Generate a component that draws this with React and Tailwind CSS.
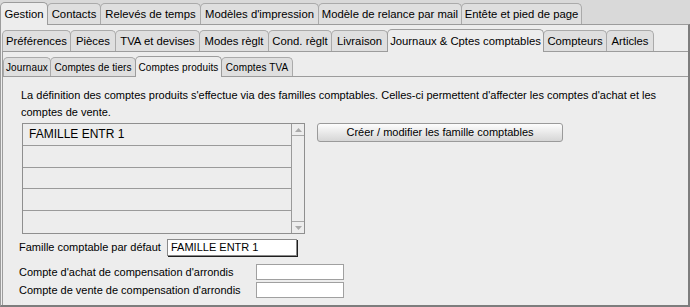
import React from 'react';

const row1 = [
    { label: 'Gestion', w: 48, selected: true },
    { label: 'Contacts', w: 54 },
    { label: 'Relevés de temps', w: 101 },
    { label: "Modèles d'impression", w: 119 },
    { label: 'Modèle de relance par mail', w: 144 },
    { label: 'Entête et pied de page', w: 121 },
];

const row2 = [
    { label: 'Préférences', w: 69 },
    { label: 'Pièces', w: 46 },
    { label: 'TVA et devises', w: 85 },
    { label: 'Modes règlt', w: 70 },
    { label: 'Cond. règlt', w: 64 },
    { label: 'Livraison', w: 57 },
    { label: 'Journaux & Cptes comptables', w: 157, selected: true },
    { label: 'Compteurs', w: 64 },
    { label: 'Articles', w: 48 },
];

const row3 = [
    { label: 'Journaux', w: 48 },
    { label: 'Comptes de tiers', w: 86 },
    { label: 'Comptes produits', w: 87, selected: true },
    { label: 'Comptes TVA', w: 72 },
];

// one tab of a tab bar, the selected one sits 1px over the panel border
const Tab = ({ label, w, selected, first, small }) => {
    const base = small ? 'text-[10px] tracking-[0.1px]' : 'text-[11.3px]';
    if (selected) {
        return (
            <div
                className={`relative z-10 flex items-center justify-center rounded-t-[5px] border border-b-0 border-[#9c9c9c] bg-[#ededed] text-black whitespace-nowrap -mb-px ${base} ${small ? 'h-[21px]' : 'h-[23px]'} ${first ? '' : '-ml-px'}`}
                style={{ width: w }}
            >
                {label}
            </div>
        );
    }
    return (
        <div
            className={`flex items-center justify-center rounded-t-[5px] border border-b-0 border-[#aaaaaa] bg-[#dfdfdf] text-black whitespace-nowrap ${base} ${small ? 'h-[19px]' : 'h-[21px]'} ${first ? '' : '-ml-px'}`}
            style={{ width: w }}
        >
            {label}
        </div>
    );
};

const TabBar = ({ tabs, small }) => (
    <div className={`flex items-end ${small ? 'h-[20px]' : 'h-[22px]'}`}>
        {tabs.map((t, i) => (
            <Tab key={t.label} {...t} first={i === 0} small={small} />
        ))}
    </div>
);

const FamilyList = () => (
    <div className="flex w-[283px] h-[111px] border border-[#8f8f8f] bg-[#ededed]">
        <div className="flex flex-col flex-1">
            {[0, 1, 2, 3, 4].map(i => (
                <div
                    key={i}
                    className={`h-[22px] flex items-center pl-[6px] text-[12px] text-black ${i < 4 ? 'border-b border-[#9a9a9a]' : ''}`}
                >
                    {i === 0 ? 'FAMILLE ENTR 1' : ''}
                </div>
            ))}
        </div>
        <div className="w-[13px] flex flex-col justify-between border-l border-[#9a9a9a]">
            <div className="h-[12px] flex items-center justify-center border-b border-[#a8a8a8]">
                <svg width="7" height="4" viewBox="0 0 7 4">
                    <path d="M0 4 L3.5 0 L7 4 Z" fill="#a9a9a9" />
                </svg>
            </div>
            <div className="h-[12px] flex items-center justify-center border-t border-[#a8a8a8]">
                <svg width="7" height="4" viewBox="0 0 7 4">
                    <path d="M0 0 L3.5 4 L7 0 Z" fill="#a9a9a9" />
                </svg>
            </div>
        </div>
    </div>
);

const App = () => {
    return (
        <div
            className="w-[690px] h-[307px] overflow-hidden bg-[#d9d9d9] pt-[2px] flex flex-col"
            style={{ fontFamily: '"Liberation Sans", Arial, sans-serif' }}
        >
            <TabBar tabs={row1} />

            {/* Gestion panel */}
            <div className="flex-1 w-[690px] flex flex-col bg-[#ededed] border border-[#9c9c9c] border-r-2 border-b-2 border-r-[#7d7d7d] border-b-[#7d7d7d] pt-[4px] pl-[1px]">
                <TabBar tabs={row2} />

                {/* Journaux & Cptes comptables panel */}
                <div className="flex-1 flex flex-col border-t border-l border-[#9c9c9c] pt-[4px]">
                    <TabBar tabs={row3} small />

                    {/* Comptes produits panel */}
                    <div className="flex-1 flex flex-col border-t border-l border-[#9c9c9c] -ml-px">
                        <p className="pl-[18px] pt-[10px] text-[11px] leading-[17px] text-black whitespace-nowrap">
                            La définition des comptes produits s'effectue via des familles comptables. Celles-ci permettent d'affecter les comptes d'achat et les
                            <br />
                            comptes de vente.
                        </p>

                        <div className="flex items-start mt-[2px] pl-[19px]">
                            <FamilyList />
                            <button className="ml-[12px] w-[246px] h-[19px] rounded-[3px] border border-[#9a9a9a] bg-gradient-to-b from-[#fdfdfd] to-[#d6d6d6] text-[11px] text-black">
                                Créer / modifier les famille comptables
                            </button>
                        </div>

                        <div className="flex items-center mt-[4px] pl-[16px] h-[18px]">
                            <span className="w-[148px] text-[11px] text-black whitespace-nowrap">Famille comptable par défaut</span>
                            <div className="w-[130px] h-[17px] bg-white border border-[#8a8a8a] shadow-[1px_1px_0_#1e1e1e] flex items-center pl-[3px] text-[11px] text-black">
                                FAMILLE ENTR 1
                            </div>
                        </div>

                        <div className="flex items-center mt-[8px] pl-[16px] h-[16px]">
                            <span className="w-[237px] text-[11px] text-black whitespace-nowrap">Compte d'achat de compensation d'arrondis</span>
                            <div className="w-[88px] h-[16px] bg-white border border-[#a0a0a0]" />
                        </div>

                        <div className="flex items-center mt-[2px] pl-[16px] h-[16px]">
                            <span className="w-[237px] text-[11px] text-black whitespace-nowrap">Compte de vente de compensation d'arrondis</span>
                            <div className="w-[88px] h-[16px] bg-white border border-[#a0a0a0]" />
                        </div>
                    </div>
                </div>
            </div>
        </div>
    );
};

export default App;
